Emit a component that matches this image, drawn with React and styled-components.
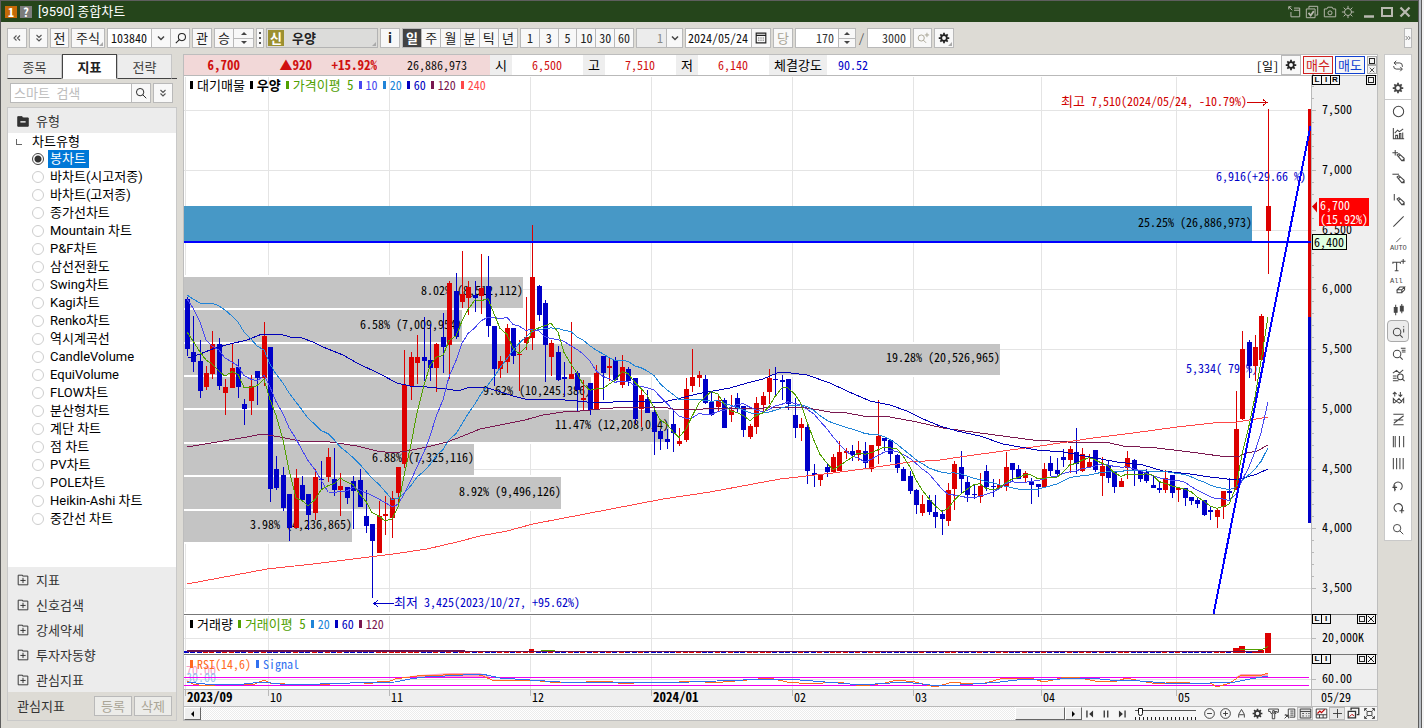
import React, { useState } from 'react';
import styled, { createGlobalStyle, css } from 'styled-components';

const mono = `'Noto Sans Mono CJK KR', 'Noto Sans CJK KR', 'Liberation Mono', monospace`;
const sans = `Roboto, 'Noto Sans CJK KR', 'Noto Sans', sans-serif`;
const UP = '#dc0000';
const DOWN = '#0000c8';

const Global = createGlobalStyle`
  * { box-sizing: border-box; }
  body { margin: 0; background: #dddbd5; font: 12px/16px ${mono}; color: #000; }
  button, input, select { font: inherit; color: inherit; margin: 0; padding: 0; border-radius: 0; }
  svg text { font-family: ${mono}; font-size: 12px; white-space: pre; }
`;

/* ---------- icons ---------- */
const gear = (
  <>
    <circle cx="8" cy="8" r="3.2" strokeWidth="2" />
    <path d="M8 2v2.5M8 11.500v2.500M2 8h2.500M11.500 8H14M3.800 3.800l1.700 1.700M10.500 10.500l1.700 1.700M12.200 3.800l-1.700 1.700M5.500 10.500l-1.700 1.700" strokeWidth="2" />
  </>
);
const pencil = <path d="M6.500 7.500l2-1.500 5.500 5v2.500h-2.500zM8 9l2-1.500M12 13.500l2-2" />;
const lens = <><circle cx="6.500" cy="8.500" r="4" /><path d="M9.500 11.500L12.500 14.500" /></>;

const ICONS = {
  left2: <path d="M7.500 5.500L5 8l2.500 2.500M11 5.500L8.500 8l2.500 2.500" stroke="#555" />,
  right2: <path d="M5 5.500L7.500 8 5 10.500M8.500 5.500L11 8l-2.500 2.500" stroke="#555" />,
  down2: <path d="M5.500 5L8 7.500 10.500 5M5.500 8.500L8 11l2.500-2.500" stroke="#555" />,
  caret: <path d="M5 6.500L8 9.500l3-3" strokeWidth="1.500" stroke="#444" />,
  searchL: <><circle cx="9.500" cy="6.500" r="3.800" /><path d="M6.800 9.200L3 13" /></>,
  search: <><circle cx="7" cy="7" r="4.200" /><path d="M10 10l4 4" /></>,
  gear,
  calendar: <><path d="M2.500 2.500h11v11h-11zM2.500 5h11" strokeWidth="1.300" /><path d="M5 8h7M5 10.500h7" strokeDasharray="1 1.500" /></>,
  zoomPlus: <><circle cx="6" cy="8" r="3.500" /><path d="M8.500 10.500l3 3M12.500 2v5M10 4.500h5" /></>,
  dock: <path d="M2 2l4 4M2 5V2h3M8 3.500h6.500v10h-10V8M8 6h6.500" />,
  layers: <><path d="M4.500 4V1.500h10v10H12M1.500 4.500h10v10h-10z" /><path d="M4 9l2.500 3L10 7" strokeWidth="2" /></>,
  camera: <><path d="M1.500 4.500h3l1-2h5l1 2h3v9h-13z" /><circle cx="8" cy="9" r="2.300" /></>,
  sun: <><circle cx="8" cy="8" r="4" /><path d="M8 1v3M8 12v3M1 8h3M12 8h3M3 3l2 2M11 11l2 2M13 3l-2 2M5 11l-2 2" /></>,
  min: <path d="M3 12.500h10" strokeWidth="2.500" />,
  max: <path d="M3 4h10v8H3z" strokeWidth="2" />,
  close: <path d="M3.500 3.500l9 9M12.500 3.500l-9 9" strokeWidth="2.300" />,
  cut: <path d="M2 2l12 12M14 2L2 14" strokeWidth="1.800" />,
  boxPlus: <path d="M2.500 13.500v-11h5v1h6v10zM8 5.500v6M5 8.500h6" />,
  boxMinus: <><path d="M2 3h5l1 1.500h6V14H2z" fill="currentColor" /><path d="M5 9h6" stroke="#fff" strokeWidth="1.500" /></>,
  cycle: <path d="M6 2L3.500 4.500 6 7M3.500 4.500H10q3 0 3 3.500v1M10.500 14l2.500-2.500L10.500 9M12.500 11.500H6q-3 0-3-3.500" />,
  circle: <circle cx="8" cy="8" r="5.500" />,
  bars: <path d="M2.500 2v11.500H14M5 13v-3h2v3M9 13V8h1.500v5M12.500 13V7M4 7.500l3-3 2 1.500 4-3" />,
  penPlus: <><path d="M4.500 2v6M1.500 5h6" />{pencil}</>,
  penMinus: <><path d="M1.500 4.500h7" />{pencil}</>,
  penBar: <><path d="M3.500 2v7" />{pencil}</>,
  diag: <path d="M2.500 13.500L13.500 2.500" />,
  textPlus: <><path d="M2 6V4.500h8V6M6 4.500v9M4 13.500h4M13 1v5M10.500 3.500h5" /></>,
  eraser: <path d="M6.500 10.500l3-3h5l-3 3zM6.500 10.500v3h5v-3M11.500 13.500l3-3v-3" />,
  candles: <><path d="M5 3v11M11.500 2v10" /><path d="M3.500 6h3v5h-3zM10 4.500h3v5h-3z" fill="currentColor" /></>,
  lensI: <>{lens}<path d="M13.500 5v4M13.500 2.500v1" /></>,
  lensLines: <>{lens}<path d="M10.500 2.500h5M11.500 4.500h4M11.500 6.500h4" /></>,
  chartLens: <><path d="M2 5.500l4-3 3 3 4-3.500M2 8.500h4M2 11h4M2 13.500h6" /><circle cx="10" cy="9.500" r="3" /><path d="M12 11.500l2.500 2.500" /></>,
  zigzag: <path d="M4 7V2.500M2 4.500l2-2 2 2M10 2v5M8 5l2 2 2-2M2.500 14V9l3 3 3-3 2.500 3 2.500-3v5M3 14l3-2 3 2 3-2" />,
  zed: <path d="M2.500 2.500h11M13.500 4L3 12M3 8.500h10M2.500 13.500h11" />,
  vlines: <path d="M2.500 2v12M4.500 2v12M9 2v12M13.500 2v12" />,
  vlines2: <path d="M2.500 2v12M6 2v12M9.500 2v12M13 2v12" />,
  undo: <><path d="M5 12.500a4.500 4.500 0 1 1 5 0" /><path d="M1.500 10h5M4 7.500V14" /></>,
  redo: <><path d="M6 12.500a4.500 4.500 0 1 1 5-1" /><path d="M9 11.500h5M11.500 9v5" /></>,
  first: <><path d="M4.500 4v8" strokeWidth="1.500" /><path d="M11.500 4v8L7 8z" fill="currentColor" stroke="none" /></>,
  pause: <path d="M6 4v8M10 4v8" strokeWidth="1.500" />,
  last: <><path d="M11.500 4v8" strokeWidth="1.500" /><path d="M4.500 4v8L9 8z" fill="currentColor" stroke="none" /></>,
  zoomOut: <><circle cx="8" cy="8" r="6" /><path d="M5 8h6" /></>,
  zoomIn: <><circle cx="8" cy="8" r="6" /><path d="M5 8h6M8 5v6" /></>,
  letterA: <path d="M4.500 13V9L8 3l3.500 6v4M5 9.500h6" />,
  hammer: <path d="M2 2.500h12v4h-2v-1H9.500L11 8H9.500v6.500h-3V8H5L4 5.500H2zM7 4.500h2v3H7z" />,
  news: <path d="M6.500 9V2.500h8v10h-6M9 5h4M9 7.500h4M9 10h4M2 14l5-5M3 9l4 4M2 10h5v4" />,
  table: <path d="M1.500 2.500h13v11h-13zM1.500 5.500h13M4 8h2M4 11h2M8.500 8h1M8.500 11h1M11.500 8h1.500M11.500 11h1.500" />,
  quote: <><path d="M1.500 2.500h13v11h-13zM1.500 9.500h13M5.500 9.500v4M10 9.500v4" /><path d="M3 8l3-3 2 2 4-4" stroke="#c00000" strokeWidth="1.500" /></>,
  cross: <path d="M8 2.500v11M2.500 8h11" />,
  stack: <><path d="M5 4V1.500h9.500v8H12M1.500 5.500h9v8h-9z" strokeWidth="1.600" /><path d="M3 12l3-3 3 2" stroke="#c00000" /></>,
  expand: <path d="M2 5V2h3M11 2h3v3M14 11v3h-3M5 14H2v-3M2 2l2.500 2.500M14 2l-2.500 2.500M2 14l2.500-2.500M14 14l-2.500-2.500M5 5.500h6v5H5z" />,
};
const Svg = styled.svg`display: block; flex: none; width: ${p => p.$s}px; height: ${p => p.$s}px;`;
const Icon = ({ name, size = 16 }) => (
  <Svg $s={size} viewBox="0 0 16 16" fill="none" stroke="currentColor" strokeWidth="1.100" aria-hidden="true">{ICONS[name]}</Svg>
);

/* ---------- window frame ---------- */
const Screen = styled.div`display: flex; min-height: 100vh;`;
const Window = styled.main`
  flex: 1; min-width: 0; display: flex; flex-direction: column; background: #dddbd5;
  border-left: 1px solid #5e5e5e; border-top: 1px solid #5e5e5e;
`;
const Frame = styled.div`
  width: 6px; background: #f2f2f2;
  border-left: 1px solid #5b5b5b; box-shadow: inset 2px 0 0 #b8bdc3, inset 3px 0 0 #5b5b5b;
`;
const TitleBar = styled.header`
  display: flex; align-items: center; height: 21px; padding: 0 6px 0 4px; gap: 3px;
  background: #25451b; color: #fff;
`;
const Badge = styled.span`
  width: 12px; height: 12px; text-align: center; line-height: 12px; font-weight: 700;
  background: ${p => (p.$grey ? '#7c7c7c' : '#c46a08')};
`;
const Title = styled.h1`margin: 0 0 0 3px; font: 13px/16px ${sans}; flex: 1;`;
const TitleButton = styled.button`
  width: 15px; height: 18px; border: 0; background: none; color: #b9b9b0;
  display: flex; align-items: center; justify-content: center;
`;

/* ---------- toolbar ---------- */
const Toolbar = styled.div`
  display: flex; align-items: center; gap: 2px; height: 32px; padding: 0 6px; color: #222;
`;
const Group = styled.div`
  display: flex; height: 20px; width: ${p => p.$w}px; flex: none; background: #fff; border: 1px solid #b9b9b9;
  && > * + * { border-left: 1px solid #b9b9b9; }
`;
const center = css`display: flex; align-items: center; justify-content: center;`;
const ToolButton = styled.button`
  ${center}
  position: relative; height: 20px; width: ${p => p.$w || 20}px; flex: none; font-size: 13px;
  border: 1px solid #b9b9b9; background: #f8f8f8; color: ${p => (p.$off ? '#aaa596' : '#222')};
  font-weight: ${p => (p.$bold ? 700 : 400)};
`;
const Corner = styled.i`
  position: absolute; right: 1px; bottom: 1px; border: 2px solid; border-color: transparent #aaa #aaa transparent;
`;
const Cell = styled.button`
  ${center}
  flex: ${p => (p.$w ? `0 0 ${p.$w}px` : 1)}; min-width: 0; border: 0; font-size: ${p => (p.$num ? 12 : 13)}px;
  background: ${p => (p.$on ? '#434343' : '#f8f8f8')}; color: ${p => (p.$on ? '#fff' : '#222')};
  font-weight: ${p => (p.$on ? 700 : 400)};
`;
const Field = styled.input`
  flex: 1; min-width: 0; border: 0; outline: 0; background: ${p => (p.$off ? '#ececec' : '#fff')};
  text-align: ${p => p.$align || 'left'}; padding: 0 ${p => p.$pad || 3}px; color: ${p => p.$c || '#111'};
  &::placeholder { color: #bdbdbd; font-size: 13px; }
`;
const Spin = styled.div`
  width: ${p => p.$w || 17}px; display: flex; flex-direction: column; background: #f8f8f8;
  && > * + * { border-top: 1px solid #b9b9b9; }
`;
const SpinButton = styled.button`
  ${center} flex: 1; border: 0; background: none;
  &::before { content: ''; border: 3px solid transparent; border-top-width: 0; border-bottom-color: #444; }
  &:last-child::before { border-top-width: 3px; border-bottom-width: 0; border-top-color: #444; }
`;
const Dots = styled.button`
  width: 8px; height: 20px; border: 1px solid #b9b9b9; background: #f8f8f8; ${center}
  &::before { content: ''; width: 2px; height: 2px; background: #555; box-shadow: 0 -5px #555, 0 5px #555; }
`;
const StockName = styled.div`
  position: relative; width: 112px; height: 20px; flex: none; display: flex; align-items: center; gap: 8px; padding: 0 1px;
  border: 1px solid #b3b3b3; background: #dcdcda; font-weight: 700; font-size: 13px;
`;
const StockTag = styled.span`width: 16px; height: 16px; background: #9c9030; color: #fff; text-align: center;`;
const Slash = styled.span`width: 7px; text-align: center; color: #555;`;
const Push = styled.span`flex: 1;`;

/* ---------- content columns ---------- */
const Content = styled.div`flex: 1; display: flex; gap: 6px; padding: 0 6px 7px; min-height: 0;`;
const Side = styled.aside`width: 170px; flex: none; display: flex; flex-direction: column; font-size: 13px;`;
const Tabs = styled.div`display: flex; height: 25px; border-bottom: 1px solid #444;`;
const Tab = styled.button`
  width: 55px; height: 25px; background: ${p => (p.$on ? '#fff' : '#ededed')};
  border: 1px solid ${p => (p.$on ? '#444' : '#c6c6c6')}; border-bottom: 1px solid ${p => (p.$on ? '#fff' : '#444')};
  font-weight: ${p => (p.$on ? 700 : 400)}; color: ${p => (p.$on ? '#222' : '#444')};
`;
const SearchRow = styled.form`display: flex; height: 28px; padding: 4px 4px 4px 3px; gap: 2px;`;
const TreeBox = styled.section`
  flex: 1; display: flex; flex-direction: column; background: #fff; border: 1px solid #c9c9c9;
`;
const SectionButton = styled.button`
  display: flex; align-items: center; gap: 6px; width: 100%; height: 25px; padding: 0 8px;
  border: 0; background: #ececec; color: #333; text-align: left;
`;
const TreeRoot = styled.div`
  height: 17px; display: flex; align-items: center; gap: 10px; padding-left: 8px; font: 13px/17px ${sans};
  &::before { content: ''; width: 5px; height: 5px; border: solid #666; border-width: 0 0 1px 1px; }
`;
const Choices = styled.fieldset`flex: 1; margin: 0; padding: 0; border: 0;`;
const Choice = styled.label`
  display: flex; align-items: center; gap: 4px; height: 18px; padding-left: 24px; font: 13px/18px ${sans};
  span { padding: 0 3px 0 2px; }
  input:checked + span { background: #0078d7; color: #fff; }
`;
const Radio = styled.input`
  appearance: none; width: 12px; height: 12px; border: 1px solid #cdcdcd; border-radius: 50%; background: #fff;
  &:checked { border-color: #444; background: radial-gradient(#333 0 3px, #fff 4px); }
`;
const SideFooter = styled.div`
  display: flex; align-items: center; gap: 2px; height: 28px; padding: 0 4px 0 9px; background: #dddbd5; color: #333;
  span { flex: 1; }
`;
const FooterButton = styled.button`width: 38px; height: 20px; border: 1px solid #b9b9b9; background: #ecece9; color: #aaa596;`;

const ChartBox = styled.section`
  flex: 1; min-width: 0; display: flex; flex-direction: column; border: 1px solid #bdbdbd; background: #fff;
`;
const Quote = styled.div`display: flex; height: 21px; border-bottom: 1px solid #b9b9b9; background: #fff; line-height: 19px;`;
const QuoteCell = styled.span`
  flex: none; width: ${p => p.$w}px; padding: 0 ${p => p.$pr || 0}px 0 0; text-align: right; white-space: nowrap;
  color: ${p => p.$c || '#111'}; background: ${p => p.$bg || '#fff'};
  font-weight: ${p => (p.$bold ? 700 : 400)}; font-size: ${p => (p.$bold ? 13 : 12)}px;
`;
const QuoteName = styled.span`
  flex: none; width: ${p => p.$w || 22}px; background: #eee; text-align: center; font-size: 13px;
`;
const QuoteTools = styled.div`flex: 1; display: flex; justify-content: flex-end; align-items: center; gap: 2px; padding: 0 1px;`;
const TradeButton = styled.button`
  width: 30px; height: 18px; border: 1px solid ${p => p.$c}; color: ${p => p.$c}; background: #f7f7f7;
  font-size: 13px; line-height: 16px;
`;
const MiniStack = styled.div`display: flex; flex-direction: column; width: 9px;`;
const MiniButton = styled.button`
  ${center} width: 10px; height: ${p => p.$h || 9}px; background: #f4f4f4; border: 1px solid ${p => p.$c || '#aaa'};
  font: 700 8px/8px 'Liberation Sans', sans-serif; margin-left: ${p => (p.$join ? -1 : 0)}px;
`;
const Square = styled.i`width: 6px; height: 6px; border: 1px solid #222;`;

const Pane = styled.div`
  position: relative; display: flex; flex: ${p => (p.$h ? `0 0 ${p.$h}px` : '1 0 538px')};
  border-top: ${p => (p.$h ? '1px solid #777' : '0')};
`;
const Plot = styled.svg`
  display: block; flex: 1; min-width: 0; width: 0; height: 100%; min-height: 0;
  overflow: ${p => (p.$free ? 'visible' : 'hidden')};
`;
const Axis = styled.div`width: 66px; position: relative; background: #efefef; border-left: 1px solid #b9b9b9;`;
const AxisPlot = styled.svg`display: block; width: 65px; height: 100%; overflow: visible;`;
const PaneButtons = styled.div`
  position: absolute; left: 0; right: 0; top: -1px; display: flex; justify-content: space-between; padding: 0 1px 0 0;
  > div { display: flex; }
`;
const Legend = styled.ul`
  position: absolute; left: 6px; top: ${p => p.$top}px; display: flex; gap: 5px; margin: 0; padding: 0; list-style: none;
`;
const LegendItem = styled.li`
  display: flex; align-items: center; gap: 4px; color: ${p => p.$c}; white-space: pre;
  font-weight: ${p => (p.$bold ? 700 : 400)}; font-size: ${p => (p.$wide ? 13 : 12)}px;
  &::before { content: ''; width: 3px; height: 8px; background: ${p => p.$c}; }
`;
const TimeRow = styled.div`display: flex; flex: 0 0 17px; border-top: 1px solid #b9b9b9; background: #efefef;`;
const BottomBar = styled.div`
  display: flex; flex: 0 0 14px; border-top: 1px solid #b9b9b9; background: #f6f6f6; color: #333; align-items: stretch;
`;
const Track = styled.div`
  flex: 1; display: flex; justify-content: flex-end;
  background: repeating-conic-gradient(#fff 0 25%, #ececec 0 50%) 0 0 / 2px 2px;
`;
const Raised = styled.button`
  ${center} width: ${p => p.$w || 17}px; height: 13px; border: 1px solid #666; border-top-color: #fff; border-left-color: #fff; background: #efefef;
  &::before {
    content: ''; border: 3px solid transparent;
    border-left: ${p => (p.$dir === 'right' ? '3px solid #000' : '0')};
    border-right: ${p => (p.$dir === 'left' ? '3px solid #000' : '0')};
  }
`;
const BarButton = styled.button`
  ${center} width: 16px; height: 13px; border: ${p => (p.$on ? '1px solid #bbb' : 0)};
  background: ${p => (p.$on ? '#e6e6e6' : 'none')};
`;
const Slider = styled.input`
  appearance: none; width: 61px; height: 13px; margin: 0 5px;
  background:
    linear-gradient(#555, #555) 0 3px / 100% 1px no-repeat,
    repeating-linear-gradient(90deg, #222 0 1px, transparent 1px 4px) 0 100% / 100% 3px no-repeat;
  &::-webkit-slider-thumb { appearance: none; width: 5px; height: 8px; margin-top: -3px; border: 1px solid #111; background: #fff; border-radius: 0 0 3px 3px; }
`;

const Rail = styled.nav`
  width: 28px; flex: none; align-self: flex-start; border: 1px solid #c9c9c9; background: #fff;
`;
const RailGroup = styled.div`
  padding: 0 2px; border-bottom: ${p => (p.$last ? 0 : 1)}px solid #c9c9c9;
`;
const RailButton = styled.button`
  ${center} position: relative; width: 22px; height: 22px; color: #444; padding: 0;
  border: 1px solid ${p => (p.$on ? '#aaa' : 'transparent')}; border-radius: 4px;
  background: ${p => (p.$on ? '#ececec' : 'none')};
  span { position: absolute; left: 2px; top: ${p => p.$top || 0}px; font: 7px/8px 'Liberation Mono', monospace; }
`;

/* ---------- data ---------- */
const TYPES = ['봉차트', '바차트(시고저종)', '바차트(고저종)', '종가선차트', 'Mountain 차트', 'P&F차트', '삼선전환도', 'Swing차트', 'Kagi차트', 'Renko차트', '역시계곡선', 'CandleVolume', 'EquiVolume', 'FLOW차트', '분산형차트', '계단 차트', '점 차트', 'PV차트', 'POLE차트', 'Heikin-Ashi 차트', '중간선 차트'];

// direction, high, body top, body bottom, low
const CANDLES = `b297,299,349,356 b316,352,362,372 b340,361,391,398 r366,373,387,390 r331,344,374,379 b338,344,386,390 r379,387,393,415 r343,368,388,388 b359,367,387,398 b399,404,409,425
r375,386,401,415 b371,371,378,405 r322,336,378,386 b347,347,489,502 b456,469,488,490 b467,475,508,511 b494,494,528,541 r469,478,528,528 b476,485,500,502 b494,494,515,530
r469,477,513,520 b461,479,480,489 r448,457,477,482 b448,479,490,496 r473,486,490,516 b487,487,498,504 b476,481,491,529 b469,480,507,507 b490,516,526,533 b524,524,541,598
r501,516,553,553 r496,514,516,535 r491,498,518,538 r467,467,493,506 r350,385,464,468 r352,357,386,400 r335,357,363,384 b317,357,361,381 b324,360,368,381 r343,344,368,392
b313,337,347,373 r281,283,345,379 b273,291,337,339 r251,294,302,308 r281,287,298,315 b281,295,298,312 r254,288,296,314 b256,286,326,337 b326,326,369,386 r356,361,369,378
r324,328,362,373 b328,328,356,364 r340,354,355,391 r297,337,343,350 r225,277,338,350 b285,286,315,321 b300,303,345,382 r340,343,357,376 b346,352,380,381 b362,377,379,397
r322,374,379,379 b371,373,390,411 r380,398,400,411 b383,383,410,415 r365,373,409,409 b356,356,373,400 r358,366,368,381 b357,360,380,380 r355,367,385,388 b367,369,381,386
b378,378,419,424 r390,395,409,427 b390,399,413,413 b406,412,432,455 b429,431,439,450 b429,439,442,449 b409,424,433,452 r428,441,444,446 r378,389,440,442 r349,377,386,392
r371,375,378,387 b375,379,403,404 b392,402,415,416 r395,400,407,411 b398,400,428,428 r395,410,415,422 b393,398,409,413 b406,406,430,437 r424,426,437,439 r397,403,427,434
r392,396,405,413 r369,378,392,404 b367,379,380,396 b375,380,382,400 b379,379,404,410 b398,415,428,438 r418,424,428,441 b424,427,471,484 b464,473,475,487 r474,474,480,486
b464,467,472,477 r454,457,472,472 r441,452,471,471 r448,451,453,459 b445,451,455,461 r441,450,455,461 b442,451,463,469 r445,445,469,472 r400,436,446,464 b438,438,441,451
b440,440,454,462 b454,455,468,473 b467,469,481,481 b471,476,491,494 b489,490,505,514 r495,504,513,516 b495,500,512,515 b495,512,517,528 b510,514,519,535 r483,490,521,526
r461,464,489,510 b451,467,479,494 b476,482,495,502 b485,494,495,499 r473,486,497,503 b465,471,487,491 b479,486,487,497 r479,485,488,488 r452,467,486,491 b463,463,470,482
b465,469,479,479 r471,473,478,483 b478,482,485,504 b484,484,487,497 r463,469,487,487 b456,463,471,476 b458,470,474,476 b449,457,460,467 r446,449,460,473 b428,452,464,474
r448,454,471,472 r454,462,467,468 b450,450,470,472 r457,466,476,496 b461,466,478,483 b471,472,487,493 r478,481,487,487 r451,458,468,479 b459,460,470,486 b471,471,479,482
b469,472,481,483 b475,485,488,488 b481,488,490,493 r470,478,490,493 b475,475,493,498 r488,488,490,502 b488,488,498,506 b497,497,501,505 b498,500,504,508 b500,500,515,516
b507,510,512,520 r509,510,517,528 r491,491,507,519 b478,491,493,501 r391,429,490,490 r331,349,419,420 b340,342,366,378 r335,347,366,381 r314,316,360,360 r109,206,231,274`
  .split(/\s+/).map((s, i) => {
    const [high, top, bottom, low] = s.slice(1).split(',').map(Number);
    const up = s[0] === 'r';
    return { x: Math.floor(187.4 + 6.396 * i), up, high, top, bottom, low, close: up ? top : bottom };
  });

// moving average of the closes; `lead` holds the values before a full period exists
const average = (n, lead) => CANDLES.map((c, i) => {
  const y = i < lead.length ? lead[i] : CANDLES.slice(i - n + 1, i + 1).reduce((a, b) => a + b.close, 0) / n;
  return `${c.x},${Math.round(y * 10) / 10}`;
}).join(' ');
const MA5 = average(5, [332, 341, 352, 360]);
const MA10 = average(10, [299, 308, 322, 340, 346, 350, 358, 362, 366]);
const MA20 = average(20, [295, 299, 303, 304, 303, 306, 310, 316, 322, 332, 339, 346, 350, 364, 374, 383, 393, 402, 410]);
const MA60 = '188,358 200,354 215,348 230,344 247,340 262,334 280,334 290,337 302,338 313,342 323,347 343,355 357,363 380,374 397,383 410,386 427,387 447,389 458,391 470,387 487,388 498,391 513,396 525,399 553,399 577,401 597,403 613,402 637,401 653,403 663,402 677,399 697,394 713,391 730,388 747,383 763,379 777,373 783,372 807,375 830,383 847,391 870,401 890,405 907,411 923,419 940,426 957,431 980,436 1003,444 1037,450 1063,452 1090,457 1117,462 1143,465 1163,471 1190,474 1210,477 1227,479 1240,479 1247,477 1257,474 1268,469';
const MA120 = '187,447 217,442 247,437 262,434 280,437 300,441 330,442 357,446 377,451 393,453 407,451 427,447 447,442 463,436 480,429 525,420 543,415 563,412 580,411 600,409 627,407 663,407 673,409 703,409 730,408 757,409 770,407 807,408 830,412 847,413 863,416 890,417 917,422 943,428 980,433 1033,440 1067,442 1110,443 1123,446 1157,448 1190,452 1220,456 1240,456 1247,453 1257,451 1268,445';
const MA240 = '187,584 267,569 313,564 353,559 393,554 427,549 457,542 480,536 507,531 533,524 663,499 690,495 710,492 780,479 833,473 863,469 890,465 910,462 940,460 960,457 1003,451 1033,447 1067,442 1093,438 1133,433 1177,427 1213,423 1237,422 1268,417';
const RSI = '187,681 193,684 205,686 215,685 235,684 255,684 264,680 270,683 300,685 330,684 350,683 358,682 370,684 380,681 388,682 395,679 410,677 425,675 437,676 450,674 460,675 475,674 483,676 492,680 502,681 530,680 550,682 564,683 609,681 622,684 647,682 660,683 698,681 712,683 735,681 770,678 787,682 810,684 837,682 863,686 885,683 897,680 915,682 935,687 953,682 968,684 985,683 1004,678 1030,678 1044,682 1066,677 1080,678 1095,681 1113,682 1127,678 1140,681 1158,684 1175,682 1190,683 1210,683 1217,687 1230,683 1240,676 1250,675 1262,675 1268,673';
const SIGNAL = '187,682 205,684 235,685 262,682 280,684 320,684 350,683 395,682 410,679 425,677 445,676 482,674 500,678 530,680 560,682 620,683 690,682 770,679 800,680 850,684 875,684 905,682 930,685 960,685 1000,682 1025,679 1060,679 1090,678 1110,680 1140,681 1165,683 1210,683 1235,682 1250,679 1268,676';

const PROFILE = [
  [277, 308, 523, '8.02% (8,512,112)'], [310, 342, 462, '6.58% (7,009,954)'],
  [344, 375, 1000, '19.28% (20,526,965)'], [377, 408, 591, '9.62% (10,245,386)'],
  [410, 442, 669, '11.47% (12,208,014)'], [444, 475, 474, '6.88% (7,325,116)'],
  [477, 509, 561, '8.92% (9,496,126)'], [511, 542, 352, '3.98% (4,236,865)'],
];
const MONTHS = [[185, '2023/09', 1], [268, '10'], [389, '11'], [530, '12'], [651, '2024/01', 1], [792, '02'], [913, '03'], [1041, '04'], [1176, '05']];
const PRICES = [7500, 7000, 6500, 6000, 5500, 5000, 4500, 4000, 3500];
const priceY = v => Math.round(110 + (7500 - v) * 0.1195);

const Grid = ({ top, bottom, rows }) => (
  <g stroke="#e4e4e4" shapeRendering="crispEdges">
    {rows.map(y => <path key={y} d={`M184 ${y + 0.5}H1311`} />)}
    {MONTHS.map(([x]) => <path key={x} d={`M${x + 0.5} ${top}V${bottom}`} />)}
  </g>
);

const PriceChart = () => (
  <Plot viewBox="184 76 1127 538" preserveAspectRatio="xMaxYMin slice" role="img" aria-label="우양 일봉 차트">
    <Grid top={77} bottom={612} rows={PRICES.map(priceY)} />
    <g shapeRendering="crispEdges">
      {PROFILE.map(([t, b, r, s]) => (
        <g key={s}>
          <rect x="184" y={t - 2} width={r - 184} height={b - t + 4} fill="#fff" />
          <rect x="184" y={t} width={r - 184} height={b - t} fill="#c4c4c4" />
        </g>
      ))}
      <rect x="184" y="206" width="1068" height="36" fill="#4798c6" />
    </g>
    {PROFILE.map(([t, b, r, s]) => <text key={s} x={r} y={Math.floor((t + b) / 2) + 3} textAnchor="end">{s}</text>)}
    <text x="1252" y="227" textAnchor="end">25.25% (26,886,973)</text>
    <text x="1216" y="181" fill={DOWN}>6,916(+29.66 %)</text>
    <text x="1186" y="373" fill={DOWN}>5,334( 79 %)</text>
    <g shapeRendering="crispEdges">
      <rect x="1308" y="109" width="3" height="208" fill={UP} />
      <rect x="1308" y="317" width="3" height="206" fill={DOWN} />
      {CANDLES.map(c => (
        <g key={c.x} fill={c.up ? UP : DOWN}>
          <rect x={c.x} y={c.high} width="1" height={c.low - c.high} />
          <rect x={c.x - 2} y={c.top} width="5" height={c.bottom - c.top} />
        </g>
      ))}
    </g>
    <g fill="none" shapeRendering="crispEdges">
      <polyline points={MA240} stroke="#ff4848" />
      <polyline points={MA120} stroke="#7a1850" />
      <polyline points={MA60} stroke="#0000b8" />
      <polyline points={MA20} stroke="#2084d8" />
      <polyline points={MA10} stroke="#4848f0" />
      <polyline points={MA5} stroke="#50a000" />
      <path d="M184 242H1311" stroke="#0000ff" strokeWidth="2" />
      <path d="M1213.500 614L1310.500 126" stroke="#0000ff" strokeWidth="2" />
      <path d="M1247 102.500h20M1263 99.500l4 3-4 3" stroke="#d00000" />
      <path d="M394 603.500h-20M378 600.500l-4 3 4 3" stroke={DOWN} />
    </g>
    <text x="1247" y="106" fill="#d00000" textAnchor="end"><tspan fontSize="13">최고</tspan> 7,510(2024/05/24, -10.79%)</text>
    <text x="394" y="607" fill={DOWN}><tspan fontSize="13">최저</tspan> 3,425(2023/10/27, +95.62%)</text>
  </Plot>
);

const PriceAxis = () => (
  <AxisPlot viewBox="1312 76 65 538" preserveAspectRatio="xMinYMin slice" role="img" aria-label="가격 축">
    <g stroke="#b9b9b9" shapeRendering="crispEdges">
      {PRICES.map(v => <path key={v} d={`M1312 ${priceY(v) + 0.5}h4${[1, 2, 3, 4].map(k => `M1312 ${priceY(v + 100 * k) + 0.5}h2`).join('')}`} />)}
    </g>
    {PRICES.map(v => <text key={v} x="1322" y={priceY(v) + 4}>{v.toLocaleString('en-US')}</text>)}
    <path d="M1312 206.500l5-5v11z" fill={UP} />
    <rect x="1319" y="198" width="50" height="28" fill="#ff0000" />
    <text x="1320" y="210" fill="#fff">6,700</text>
    <text x="1320" y="224" fill="#fff">(15.92%)</text>
    <rect x="1312.500" y="234.500" width="34" height="15" fill="#e1ffe1" stroke="#000" />
    <text x="1314" y="247">6,400</text>
  </AxisPlot>
);

const VOLUME_TOP = { 54: 649, 164: 648, 165: 646, 168: 650, 169: 633 };
const VolumeChart = () => (
  <Plot viewBox="184 615 1127 39" preserveAspectRatio="xMaxYMin slice" role="img" aria-label="거래량">
    <Grid top={616} bottom={654} rows={[638]} />
    <g shapeRendering="crispEdges">
      {CANDLES.map((c, i) => {
        const y = VOLUME_TOP[i] || 651;
        return <rect key={c.x} x={c.x - 3} y={y} width={i > 163 ? 6 : 5} height={653 - y} fill={c.up ? UP : DOWN} />;
      })}
      <path d="M187 651.500H1262" stroke="#6a1450" />
      <path d="M187 650.500H465" stroke="#6a1450" />
      <path d="M541 650.500h14M1240 649.500h22l6-3" stroke="#50a000" fill="none" />
    </g>
  </Plot>
);

const RsiChart = () => (
  <Plot viewBox="184 655 1127 34" preserveAspectRatio="xMaxYMin slice" role="img" aria-label="RSI">
    <Grid top={656} bottom={689} rows={[679]} />
    <text x="186" y="675" fill="#f5a0c8">70.00</text>
    <text x="186" y="682" fill="#96c8f0">30.00</text>
    <path d="M405 677l15-2 30-2h30l10 4zM1236 677l5-3h27v3z" fill="#ffa0c0" />
    <g fill="none" shapeRendering="crispEdges">
      <path d="M184 677.500H1309M184 685.500H1309" stroke="#f000f0" />
      <polyline points={RSI} stroke="#ff6a20" />
      <polyline points={SIGNAL} stroke="#3070f0" />
    </g>
  </Plot>
);

const Legends = ({ top, items }) => (
  <Legend $top={top}>{items.map(([t, c, b]) => <LegendItem key={t} $c={c} $bold={b} $wide={/[가-힣]/.test(t)}>{t}</LegendItem>)}</Legend>
);

const AxisButtons = ({ letters, closable }) => (
  <PaneButtons>
    <div>{letters.map((l, i) => <MiniButton key={l} $c="#000" $join={i > 0} $h={10} aria-label={l}>{l}</MiniButton>)}</div>
    <div>
      <MiniButton $c="#000" $h={10} aria-label="최대화"><Square /></MiniButton>
      {closable && <MiniButton $c="#000" $h={10} $join aria-label="닫기"><Icon name="cut" size={8} /></MiniButton>}
    </div>
  </PaneButtons>
);

const RAIL_TOP = [['cycle', '새로고침'], ['gear', '설정']];
const RAIL = [['circle', '원'], ['bars', '지표'], ['penPlus', '십자선'], ['penMinus', '수평선'], ['penBar', '수직선'], ['diag', '추세선'], ['auto', '자동'], ['textPlus', '문자'], ['eraser', '전체 지우기'], ['candles', '봉'], ['lensI', '정보 조회'], ['lensLines', '목록 조회'], ['chartLens', '차트 조회'], ['zigzag', '패턴'], ['zed', '되돌림'], ['vlines', '피보나치'], ['vlines2', '시간대'], ['undo', '이전'], ['redo', '다음'], ['search', '확대']];
const BAR = [['zoomOut', '축소'], ['zoomIn', '확대'], ['letterA', '글자'], ['gear', '설정'], ['hammer', '도구'], ['news', '뉴스'], ['table', '표'], ['quote', '시세'], ['cross', '십자선'], ['stack', '창 복사'], ['expand', '전체 화면']];

export default function App() {
  const [type, setType] = useState(TYPES[0]);
  return (
    <>
      <Global />
      <Screen>
        <Window>
          <TitleBar>
            <Badge>1</Badge><Badge $grey>?</Badge>
            <Title>[9590] 종합차트</Title>
            {[['dock', '도킹'], ['layers', '창 목록'], ['camera', '화면 캡처'], ['sun', '설정']].map(([n, l]) => (
              <TitleButton key={n} aria-label={l}><Icon name={n} size={14} /></TitleButton>
            ))}
            <span />
            {[['min', '최소화'], ['max', '최대화'], ['close', '닫기']].map(([n, l]) => (
              <TitleButton key={n} aria-label={l}><Icon name={n} /></TitleButton>
            ))}
          </TitleBar>

          <Toolbar>
            <ToolButton aria-label="이전"><Icon name="left2" /></ToolButton>
            <ToolButton $w={19} aria-label="펼치기"><Icon name="down2" /></ToolButton>
            <ToolButton $w={19}>전</ToolButton>
            <ToolButton $w={34}>주식<Corner /></ToolButton>
            <Group $w={83}>
              <Field aria-label="종목코드" defaultValue="103840" />
              <Cell $w={19} aria-label="종목 목록"><Icon name="caret" /></Cell>
              <Cell $w={19} aria-label="종목 찾기"><Icon name="searchL" size={15} /></Cell>
            </Group>
            <ToolButton>관</ToolButton>
            <Group $w={40}>
              <Cell>승</Cell>
              <Spin $w={20}><SpinButton aria-label="위" /><SpinButton aria-label="아래" /></Spin>
            </Group>
            <Dots aria-label="더보기" />
            <StockName><StockTag>신</StockTag>우양<Corner /></StockName>
            <ToolButton $bold>i</ToolButton>
            <Group $w={116}>{['일', '주', '월', '분', '틱', '년'].map((t, i) => <Cell key={t} $on={i === 0}>{t}</Cell>)}</Group>
            <Group $w={114}>{['1', '3', '5', '10', '30', '60'].map(t => <Cell key={t} $num>{t}</Cell>)}</Group>
            <Group $w={47}>
              <Field aria-label="주기" defaultValue="1" $off $align="right" $c="#888" />
              <Cell $w={16} aria-label="주기 선택"><Icon name="caret" /></Cell>
            </Group>
            <Group $w={86}>
              <Field aria-label="날짜" defaultValue="2024/05/24" $pad={2} />
              <Cell $w={19} aria-label="달력"><Icon name="calendar" size={14} /></Cell>
            </Group>
            <ToolButton $off>당</ToolButton>
            <Group $w={61}>
              <Field aria-label="표시 개수" defaultValue="170" $align="right" $pad={4} $c="#333" />
              <Spin><SpinButton aria-label="증가" /><SpinButton aria-label="감소" /></Spin>
            </Group>
            <Slash>/</Slash>
            <Group $w={44}><Field aria-label="전체 개수" defaultValue="3000" $align="right" $pad={4} $c="#333" /></Group>
            <ToolButton $w={19} $off aria-label="확대 조회"><Icon name="zoomPlus" size={14} /></ToolButton>
            <ToolButton aria-label="차트 설정"><Icon name="gear" size={14} /><Corner /></ToolButton>
            <Push />
            <ToolButton $w={8} aria-label="도구 더보기"><Icon name="right2" size={12} /></ToolButton>
          </Toolbar>

          <Content>
            <Side>
              <Tabs><Tab>종목</Tab><Tab $on>지표</Tab><Tab>전략</Tab></Tabs>
              <SearchRow onSubmit={e => e.preventDefault()}>
                <Group $w={141}>
                  <Field aria-label="스마트 검색" placeholder="스마트 검색" />
                  <Cell $w={19} type="button" aria-label="검색"><Icon name="search" size={14} /></Cell>
                </Group>
                <ToolButton type="button" aria-label="검색 옵션"><Icon name="down2" /></ToolButton>
              </SearchRow>
              <TreeBox>
                <SectionButton><Icon name="boxMinus" size={14} />유형</SectionButton>
                <TreeRoot>차트유형</TreeRoot>
                <Choices aria-label="차트유형">
                  {TYPES.map(t => (
                    <Choice key={t}>
                      <Radio type="radio" name="type" checked={type === t} onChange={() => setType(t)} /><span>{t}</span>
                    </Choice>
                  ))}
                </Choices>
                {['지표', '신호검색', '강세약세', '투자자동향', '관심지표'].map(t => (
                  <SectionButton key={t}><Icon name="boxPlus" size={14} />{t}</SectionButton>
                ))}
                <SideFooter><span>관심지표</span><FooterButton>등록</FooterButton><FooterButton>삭제</FooterButton></SideFooter>
              </TreeBox>
            </Side>

            <ChartBox>
              <Quote>
                <QuoteCell $w={56} $c="#d01010" $bg="#f2d8d8" $bold>6,700</QuoteCell>
                <QuoteCell $w={72} $c="#d01010" $bg="#f2d8d8" $bold>▲920</QuoteCell>
                <QuoteCell $w={65} $c="#d01010" $bg="#f2d8d8" $bold>+15.92%</QuoteCell>
                <QuoteCell $w={113} $pr={23} $bg="#f2d8d8">26,886,973</QuoteCell>
                <QuoteName>시</QuoteName><QuoteCell $w={71} $pr={21} $c="#d01010">6,500</QuoteCell>
                <QuoteName>고</QuoteName><QuoteCell $w={71} $pr={21} $c="#d01010">7,510</QuoteCell>
                <QuoteName>저</QuoteName><QuoteCell $w={71} $pr={21} $c="#d01010">6,140</QuoteCell>
                <QuoteName $w={58}>체결강도</QuoteName><QuoteCell $w={41} $c={DOWN}>90.52</QuoteCell>
                <QuoteTools>
                  <span>[일]</span>
                  <ToolButton aria-label="설정"><Icon name="gear" size={14} /></ToolButton>
                  <TradeButton $c="#d02020">매수</TradeButton>
                  <TradeButton $c="#1040d0">매도</TradeButton>
                  <MiniStack>
                    <MiniButton aria-label="최대화"><Square /></MiniButton>
                    <MiniButton aria-label="닫기"><Icon name="cut" size={6} /></MiniButton>
                  </MiniStack>
                </QuoteTools>
              </Quote>

              <Pane>
                <PriceChart />
                <Legends top={1} items={[['대기매물', '#000'], ['우양', '#000', 1], ['가격이평 5', '#50a000'], ['10', '#4848f0'], ['20', '#2084d8'], ['60', '#0000c0'], ['120', '#7a1850'], ['240', '#ff4848']]} />
                <Axis><PriceAxis /><AxisButtons letters={['L', 'I', 'R']} /></Axis>
              </Pane>
              <Pane $h={40}>
                <VolumeChart />
                <Legends top={1} items={[['거래량', '#000'], ['거래이평 5', '#50a000'], ['20', '#2084d8'], ['60', '#0000c0'], ['120', '#7a1850']]} />
                <Axis>
                  <AxisPlot viewBox="1312 615 65 39" preserveAspectRatio="xMinYMin slice"><path d="M1312 638.500h4" stroke="#b9b9b9" /><text x="1322" y="642">20,000K</text></AxisPlot>
                  <AxisButtons letters={['L', 'I']} closable />
                </Axis>
              </Pane>
              <Pane $h={35}>
                <RsiChart />
                <Legends top={1} items={[['RSI(14,6)', '#ff6a20'], ['Signal', '#3070f0']]} />
                <Axis>
                  <AxisPlot viewBox="1312 655 65 34" preserveAspectRatio="xMinYMin slice"><path d="M1312 679.500h4" stroke="#b9b9b9" /><text x="1322" y="683">60.00</text></AxisPlot>
                  <AxisButtons letters={['L', 'I']} closable />
                </Axis>
              </Pane>
              <TimeRow>
                <Plot $free viewBox="184 690 1127 16" preserveAspectRatio="xMaxYMin slice">
                  {MONTHS.map(([x, t, b]) => (
                    <g key={t}>
                      <path d={`M${x + 0.5} 690v6`} stroke="#b9b9b9" />
                      <text x={x + 2} y="702"><tspan fontSize={b ? 13 : 12} fontWeight={b ? 700 : 400}>{t}</tspan></text>
                    </g>
                  ))}
                </Plot>
                <Axis><AxisPlot viewBox="1312 690 65 16"><text x="1321" y="702">05/29</text></AxisPlot></Axis>
              </TimeRow>
              <BottomBar>
                <Raised $dir="left" aria-label="왼쪽으로" />
                <Track><Raised $w={50} aria-label="스크롤" /></Track>
                <Raised $dir="right" aria-label="오른쪽으로" />
                {[['first', '처음'], ['pause', '정지'], ['last', '끝']].map(([n, l]) => <BarButton key={n} aria-label={l}><Icon name={n} size={14} /></BarButton>)}
                <Slider type="range" aria-label="배율" min="0" max="100" defaultValue="5" />
                {BAR.map(([n, l]) => <BarButton key={n} $on={n === 'table' || n === 'cross'} aria-label={l}><Icon name={n} size={13} /></BarButton>)}
              </BottomBar>
            </ChartBox>

            <Rail aria-label="그리기 도구">
              <RailGroup>{RAIL_TOP.map(([n, l]) => <RailButton key={n} aria-label={l}><Icon name={n} size={14} /></RailButton>)}</RailGroup>
              <RailGroup $last>
                {RAIL.map(([n, l]) => (
                  <RailButton key={n} $on={n === 'lensI'} $top={n === 'auto' ? 11 : 0} aria-label={l}>
                    {n === 'auto' ? <><Svg $s={14} viewBox="0 0 16 16" stroke="currentColor"><path d="M6 7l5-5" /></Svg><span>AUTO</span></> : <Icon name={n} size={n === 'search' ? 14 : 15} />}
                    {n === 'eraser' && <span>All</span>}
                  </RailButton>
                ))}
              </RailGroup>
            </Rail>
          </Content>
        </Window>
        <Frame />
      </Screen>
    </>
  );
}
